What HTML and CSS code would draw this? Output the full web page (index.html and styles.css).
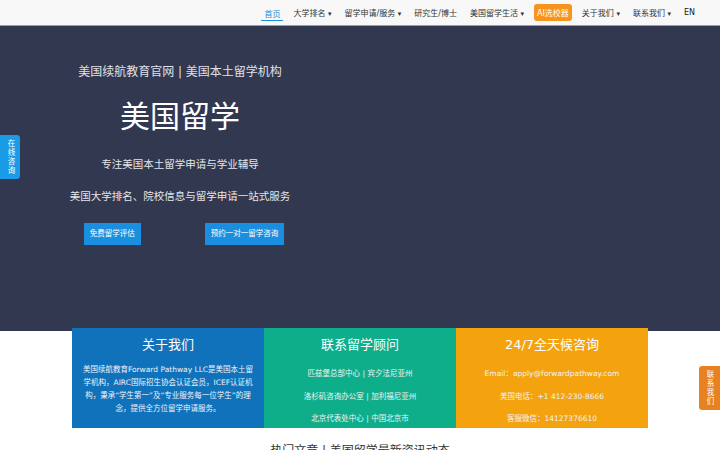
FILE: index.html
```html
<!doctype html>
<html lang="zh-CN">
  <head>
    <meta charset="utf-8">
    <title>美国续航教育 Forward Pathway</title>
    <link rel="stylesheet" href="styles.css">
  </head>
  <body>
    <!-- top menu -->
    <header class="topbar">
      <nav class="menu">
        <a class="menu-item active" href="#">首页</a>
        <a class="menu-item" href="#">大学排名 <span class="caret">▾</span></a>
        <a class="menu-item" href="#">留学申请/服务 <span class="caret">▾</span></a>
        <a class="menu-item" href="#">研究生/博士</a>
        <a class="menu-item" href="#">美国留学生活 <span class="caret">▾</span></a>
        <a class="menu-item ai" href="#">AI选校器</a>
        <a class="menu-item" href="#">关于我们 <span class="caret">▾</span></a>
        <a class="menu-item" href="#">联系我们 <span class="caret">▾</span></a>
        <a class="menu-item lang" href="#">EN</a>
      </nav>
    </header>

    <section class="hero">
      <div class="hero-col">
        <div class="hero-kicker">美国续航教育官网 | 美国本土留学机构</div>
        <h1 class="hero-title">美国留学</h1>
        <p class="hero-line">专注美国本土留学申请与学业辅导</p>
        <p class="hero-line">美国大学排名、院校信息与留学申请一站式服务</p>
        <div class="hero-actions">
          <a class="btn" href="#">免费留学评估</a>
          <a class="btn" href="#">预约一对一留学咨询</a>
        </div>
      </div>
    </section>

    <a class="side-tab left" href="#">在线咨询</a>
    <a class="side-tab right" href="#">联系我们</a>

    <section class="cards">
      <div class="card blue">
        <h2>关于我们</h2>
        <p class="about">美国续航教育Forward Pathway LLC是美国本土留学机构，AIRC国际招生协会认证会员，ICEF认证机构，秉承“学生第一”及“专业服务每一位学生”的理念，提供全方位留学申请服务。</p>
      </div>
      <div class="card green">
        <h2>联系留学顾问</h2>
        <p>匹兹堡总部中心 | 宾夕法尼亚州</p>
        <p>洛杉矶咨询办公室 | 加利福尼亚州</p>
        <p>北京代表处中心 | 中国北京市</p>
      </div>
      <div class="card orange">
        <h2>24/7全天候咨询</h2>
        <p>Email：apply@forwardpathway.com</p>
        <p>美国电话：+1 412-230-8666</p>
        <p>客服微信：14127376610</p>
      </div>
    </section>

    <h3 class="section-title">热门文章 | 美国留学最新资讯动态</h3>
  </body>
</html>
```

FILE: styles.css
```css
html, body {
  margin: 0;
  padding: 0;
}

body {
  font-family: "DejaVu Sans", "Noto Sans CJK SC", sans-serif;
  background: #fff;
  color: #333;
  overflow: hidden;
}

a {
  text-decoration: none;
}

/* top menu */
.topbar {
  height: 26px;
  background: #f8f8f8;
  border-bottom: 1px solid #9a9ca8;
  box-sizing: border-box;
}

.menu {
  display: flex;
  justify-content: flex-end;
  align-items: center;
  height: 100%;
  padding-right: 22px;
  gap: 7px;
}

.menu-item {
  font-size: 8px;
  color: #333;
  padding: 3px 3px;
  white-space: nowrap;
}

.menu-item .caret {
  font-size: 7px;
}

.menu-item.active {
  color: #1a8fd8;
  border-bottom: 1px solid #1a8fd8;
  padding-bottom: 1px;
}

.menu-item.ai {
  background: #f7941d;
  color: #fff;
  border-radius: 3px;
  padding: 3px 3px;
}

.menu-item.lang {
  font-size: 8px;
  color: #222;
}

/* hero */
.hero {
  height: 305px;
  background: #31384f;
}

.hero-col {
  width: 360px;
  padding-top: 37px;
  text-align: center;
  color: #e6e6ea;
}

.hero-kicker {
  font-size: 12px;
  line-height: 18px;
  color: #e0e0e6;
}

.hero-title {
  margin: 16px 0 18px;
  font-size: 30px;
  line-height: 40px;
  font-weight: normal;
  color: #fff;
}

.hero-line {
  margin: 0 0 14px;
  font-size: 10.5px;
  line-height: 18px;
  color: #e6e6ea;
}

.hero-actions {
  display: flex;
  justify-content: center;
  gap: 64px;
  padding-left: 8px;
  margin-top: 18px;
}

.btn {
  background: #1a8fe0;
  color: #fff;
  font-size: 7.5px;
  line-height: 22px;
  padding: 0 6px;
}

/* floating side tabs */
.side-tab {
  position: absolute;
  width: 20px;
  height: 44px;
  font-size: 7.5px;
  letter-spacing: 1.5px;
  line-height: 20px;
  color: #fff;
  text-align: center;
  writing-mode: vertical-rl;
  text-orientation: upright;
  box-sizing: border-box;
}

.side-tab.left {
  left: 0;
  top: 135px;
  background: #1a9be6;
  border-radius: 0 3px 3px 0;
}

.side-tab.right {
  right: 0;
  top: 366px;
  width: 21px;
  line-height: 21px;
  background: #e8811f;
  border-radius: 3px 0 0 3px;
}

/* info cards */
.cards {
  width: 576px;
  margin: -3px auto 0;
  display: grid;
  grid-template-columns: repeat(3, 1fr);
}

.card {
  height: 100px;
  padding: 7px 8px 0;
  box-sizing: border-box;
  text-align: center;
  color: #eef3f8;
}

.card h2 {
  margin: 0 0 8px;
  font-size: 13px;
  line-height: 20px;
  font-weight: normal;
  color: #fff;
}

.card p {
  margin: 0;
  font-size: 7.5px;
  line-height: 22.5px;
}

.card p.about {
  line-height: 13px;
  margin-top: 1px;
}

.card.blue {
  background: #1172bc;
}

.card.green {
  background: #0fae8a;
}

.card.orange {
  background: #f4a20e;
}

.section-title {
  margin: 13px 0 0;
  text-align: center;
  font-size: 12px;
  font-weight: normal;
  color: #333;
}
```
